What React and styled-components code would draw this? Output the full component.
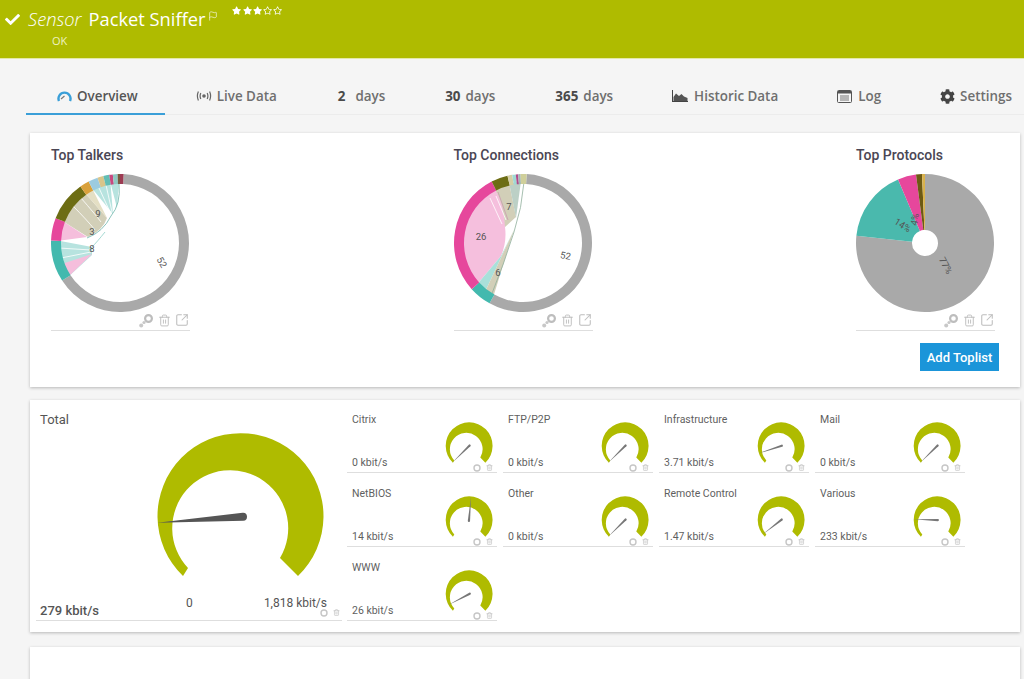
import React from 'react';
import styled, { createGlobalStyle } from 'styled-components';
import { FaCheck, FaStar, FaRegStar, FaCog } from 'react-icons/fa';
import { Flag, Trash2, SquareArrowOutUpRight } from 'lucide-react';

const GlobalStyle = createGlobalStyle`
  html, body {
    margin          : 0;
    height          : 100%;
    overflow        : hidden;
    background-color: #f5f5f5;
    font-family     : "Open Sans", "Liberation Sans", sans-serif;
  }
`
const Header = styled.header`
  height          : 59px;
  box-sizing      : border-box;
  padding         : 6px 0 0 5px;
  background-color: #afbb00;
  border-bottom   : 1px solid #e3e8a8;
  color           : #fff;
`
const HeaderTop = styled.div`
  display         : flex;
  align-items     : flex-start;
  height          : 28px;
`
const SensorName = styled.h1`
  margin          : 0 0 0 8px;
  font-size       : 18.3px;
  line-height     : 26px;
  font-weight     : 400;
  i { margin-right: 7px; font-weight: 300; }
`
const FlagMark = styled.span`
  margin          : -2px 0 0 3px;
  height          : 11px;
`
const Stars = styled.span`
  display         : flex;
  gap             : 1px;
  margin          : 0 0 0 14px;
  font-size       : 9.2px;
`
const StatusText = styled.div`
  margin-left     : 47px;
  font-size       : 11px;
  line-height     : 14px;
  color           : #eef2c0;
`
const TabBar = styled.nav`
  display         : flex;
  height          : 55px;
  margin-left     : 26px;
  border-bottom   : 1px solid #ececec;
`
const Tab = styled.div`
  display         : flex;
  align-items     : center;
  gap             : 5px;
  height          : 56px;
  box-sizing      : border-box;
  padding         : 20px ${p => p.$right || 30}px 0 ${p => p.$left || 29}px;
  border-bottom   : 2px solid ${p => p.$active ? '#3a9fd8' : 'transparent'};
  font-size       : 13.4px;
  font-weight     : 600;
  color           : ${p => p.$active ? '#555' : '#6f6f6f'};
  white-space     : nowrap;
  b { font-weight: 700; color: #4a4a4a; margin-right: ${p => p.$numGap || 0}px; }
`
const Panel = styled.section`
  margin          : ${p => p.$top}px 4px 0 30px;
  background-color: #fff;
  box-shadow      : 0 1px 3px rgba(0, 0, 0, .25);
`
const ToplistPanel = styled(Panel)`
  height          : 254px;
  box-sizing      : border-box;
  padding         : 12px 21px 0 21px;
`
const ChartRow = styled.div`
  display         : flex;
  justify-content : space-between;
  padding-right   : 4px;
`
const ChartBlock = styled.div`
  width           : 139px;
  border-bottom   : 1px solid #dedede;
  padding-bottom  : 2px;
`
const ChartTitle = styled.h3`
  margin          : 0 0 8px;
  font-family     : Roboto, sans-serif;
  font-size       : 14px;
  line-height     : 21px;
  font-weight     : 500;
  white-space     : nowrap;
  color           : #4a4654;
`
const ChartSvg = styled.svg`
  display         : block;
  width           : 138px;
  height          : 138px;
`
const ChartTools = styled.div`
  display         : flex;
  justify-content : flex-end;
  align-items     : center;
  gap             : 4px;
  height          : 16px;
  padding-right   : 1px;
  color           : #bdbdbd;
`
const ButtonRow = styled.div`
  display         : flex;
  justify-content : flex-end;
  margin-top      : 12px;
`
const AddButton = styled.button`
  width           : 79px;
  height          : 28px;
  padding         : 0;
  border          : none;
  background-color: #1b95d9;
  color           : #fff;
  font-family     : Roboto, sans-serif;
  font-size       : 13px;
  font-weight     : 500;
`
const GaugePanel = styled(Panel)`
  display         : flex;
  gap             : 5px;
  height          : 232px;
  box-sizing      : border-box;
  padding         : 5px 0 0 6px;
`
const TotalCell = styled.div`
  display         : flex;
  flex-direction  : column;
  width           : 306px;
  height          : 216px;
  box-sizing      : border-box;
  padding-left    : 4px;
  border-bottom   : 1px solid #dedede;
`
const CellLabel = styled.div`
  margin-top      : 5px;
  font-family     : Roboto, sans-serif;
  font-size       : 13px;
  line-height     : 20px;
  color           : #555;
`
const TotalGauge = styled.div`
  margin          : 2px 0 0 115px;
`
const TotalFooter = styled.div`
  display         : grid;
  grid-template-columns: 146px 77px 1fr;
  margin-top      : 12px;
  font-family     : Roboto, sans-serif;
  font-size       : 12px;
  line-height     : 14px;
  color           : #555;
`
const TotalValue = styled.div`
  padding-top     : 7px;
  font-size       : 13px;
  line-height     : 15px;
  font-weight     : 500;
`
const ScaleEnd = styled.div`
  display         : flex;
  flex-direction  : column;
  align-items     : flex-end;
  padding-right   : 2px;
  span { margin-right: 13px; }
`
const SmallGrid = styled.div`
  display         : grid;
  grid-template-columns: repeat(4, 150px);
  grid-auto-rows  : 68px;
  gap             : 6px;
`
const SmallCell = styled.div`
  display         : grid;
  grid-template-columns: 1fr 48px;
  padding         : 0 4px 0 5px;
  border-bottom   : 1px solid #dedede;
  font-family     : Roboto, sans-serif;
  font-size       : 10.5px;
  color           : #5f5f5f;
`
const SmallText = styled.div`
  display         : flex;
  flex-direction  : column;
  justify-content : space-between;
  line-height     : 14px;
  padding         : 8px 0 2px;
  white-space     : nowrap;
`
const SmallGauge = styled.div`
  margin-top      : 17px;
`
const GaugeSvg = styled.svg`
  display         : block;
  width           : ${p => p.$small ? 48 : 170}px;
  height          : ${p => p.$small ? 43 : 152}px;
`
const GaugeTools = styled.div`
  display         : flex;
  justify-content : flex-end;
  gap             : 5px;
  margin-top      : -1px;
  color           : #c6c6c6;
`
const EmptyPanel = styled(Panel)`
  height          : 60px;
`

const polar = (r, deg) => {
  const a = (deg - 90) * Math.PI / 180;
  return [69 + r * Math.cos(a), 69 + r * Math.sin(a)];
};
const wedge = (from, to, r0, r1) => {
  const large = to - from > 180 ? 1 : 0;
  const [x0, y0] = polar(r1, from);
  const [x1, y1] = polar(r1, to);
  const [x2, y2] = polar(r0, to);
  const [x3, y3] = polar(r0, from);
  return `M${x0} ${y0}A${r1} ${r1} 0 ${large} 1 ${x1} ${y1}L${x2} ${y2}A${r0} ${r0} 0 ${large} 0 ${x3} ${y3}Z`;
};
// a ribbon leaving the ring between two angles, then running to the given points
const fan = (from, to, rest) => {
  const [x0, y0] = polar(61, from);
  const [x1, y1] = polar(61, to);
  return `M${x0} ${y0}A61 61 0 0 1 ${x1} ${y1}${rest}Z`;
};

const charts = [
  {
    title: 'Top Talkers',
    inner: 59,
    segments: [
      [3, 237, '#a9a9a9'], [237, 272, '#43b9ae'], [272, 291, '#e6479c'], [291, 325, '#6d6d14'],
      [325, 333, '#d9a13c'], [333, 341, '#9ccbe0'], [341, 346, '#d8c58a'], [346, 351, '#62bdb4'],
      [351, 354, '#c8487f'], [354, 358, '#8fc8c2'], [358, 360, '#7a5a40'], [0, 3, '#9c3b52'],
    ],
    chords: [
      [fan(237, 272, 'L41 73L41 81'), '#b7e3df'],
      [fan(237, 250, 'L41 80'), '#f5bedc'],
      [fan(272, 291, 'L36 63'), '#f5bedc'],
      [fan(291, 325, 'L56 44Q52 56 37 63'), '#d2cfb8'],
      [fan(325, 333, 'L56 44'), '#e4dfc4'],
      [fan(333, 351, 'L62 40'), '#b7e3df'],
      [fan(351, 359, 'L66 34'), '#b7e3df'],
    ],
    lines: [
      ['M68 10Q70 30 60 42Q52 58 36 64', '#6fb5ab'],
      ['M41 73Q46 68 54 58', '#8fd0c8'],
      ['M8 74L40 76M10 84L40 78', '#ffffff'],
      ['M22 32Q36 46 44 56M30 24Q44 40 50 48', '#ffffff'],
      ['M48 14L60 40M55 11L61 38', '#ffffff'],
    ],
    labels: [[108, 90, '52', 60], [41, 78, '8', 0], [41, 61, '3', 0], [47, 43, '9', 0]],
  },
  {
    title: 'Top Connections',
    inner: 59,
    segments: [
      [3, 209, '#a9a9a9'], [209, 228, '#43b9ae'], [228, 333, '#e6479c'], [333, 347, '#6d6d14'],
      [347, 351, '#d6cfa6'], [351, 354, '#9fd8d4'], [354, 356, '#b04a8a'], [356, 358, '#9fb7b5'], [358, 363, '#cfcf9a'],
    ],
    chords: [
      [fan(228, 333, 'Q52 34 51 53Q53 68 47 82'), '#f5bfdd'],
      [fan(333, 347, 'L62 43L51 53Q50 30 41 15'), '#d2cfb8'],
      [fan(218, 228, 'L47 82L60 56'), '#a9e0da'],
      [fan(209, 218, 'L60 56'), '#d2cfb8'],
      [fan(347, 358, 'L62 44'), '#bcd0c6'],
    ],
    lines: [
      ['M70 8Q68 34 60 58Q50 90 37 122', '#8fae9c'],
      ['M42 22L52 46M36 24L48 50', '#ffffff'],
      ['M44 18L54 46', '#c99ab0'],
    ],
    labels: [[27, 66, '26', 0], [111, 85, '52', 10], [44, 102, '6', 0], [55, 36, '7', 0]],
  },
  {
    title: 'Top Protocols',
    inner: 13,
    segments: [
      [0, 276, '#a9a9a9'], [276, 337, '#4ab9ad'], [337, 352.5, '#e6479c'], [352.5, 357.5, '#6d5a14'], [357.5, 360, '#d9b24c'],
    ],
    chords: [],
    lines: [],
    labels: [[87, 93, '77%', 62], [45, 54, '14%', 32], [62, 46, '4%', -80]],
  },
];

const gauges = [
  ['Citrix', '0 kbit/s', -135],
  ['FTP/P2P', '0 kbit/s', -135],
  ['Infrastructure', '3.71 kbit/s', -108],
  ['Mail', '0 kbit/s', -135],
  ['NetBIOS', '14 kbit/s', 5],
  ['Other', '0 kbit/s', -135],
  ['Remote Control', '1.47 kbit/s', -128],
  ['Various', '233 kbit/s', -88],
  ['WWW', '26 kbit/s', -118],
];

const tabs = [
  { icon: <OverviewIcon />, label: 'Overview', active: true, left: 31, right: 27 },
  { icon: <LiveIcon />, label: 'Live Data', left: 31 },
  { num: '2', label: 'days', numGap: 5, left: 31, right: 31 },
  { num: '30', label: 'days', right: 31 },
  { num: '365', label: 'days', right: 29 },
  { icon: <HistoryIcon />, label: 'Historic Data' },
  { icon: <LogIcon />, label: 'Log' },
  { icon: <FaCog size={15} color="#444" />, label: 'Settings' },
];

function OverviewIcon() {
  return (
    <svg width="15" height="12" viewBox="0 0 15 12" fill="none">
      <path d="M2 11A6 6 0 1 1 13 11" stroke="#3a9fd8" strokeWidth="2.4" />
      <path d="M4 9L7.5 6" stroke="#777" strokeWidth="1.2" />
    </svg>
  );
}

function LiveIcon() {
  return (
    <svg width="16" height="12" viewBox="0 0 16 12" fill="none" stroke="#666" strokeWidth="1.2">
      <circle cx="8" cy="6" r="1.8" fill="#666" stroke="none" />
      <path d="M4.8 3Q3.4 6 4.8 9M11.2 3Q12.6 6 11.2 9M2.4 1.5Q.4 6 2.4 10.5M13.6 1.5Q15.6 6 13.6 10.5" />
    </svg>
  );
}

function HistoryIcon() {
  return (
    <svg width="18" height="13" viewBox="0 0 18 13">
      <path d="M1 0V12H17V11H2V0Z" fill="#444" />
      <path d="M2.5 11L2.5 7L5 3.5L8 6L10.5 4L13 6.5L16.5 8V11Z" fill="#555" />
    </svg>
  );
}

function LogIcon() {
  return (
    <svg width="16" height="13" viewBox="0 0 16 13">
      <rect x=".5" y=".5" width="14" height="12" rx="1" fill="#f5f5f5" stroke="#555" />
      <rect x="1" y="1" width="13" height="2.5" fill="#555" />
      <path d="M3 6H12M3 8H12M3 10H12" stroke="#777" />
    </svg>
  );
}

function KeyIcon() {
  return (
    <svg width="15" height="15" viewBox="0 0 15 15" fill="none">
      <circle cx="9.5" cy="5.5" r="3.4" stroke="#bdbdbd" strokeWidth="2.2" />
      <circle cx="5" cy="9.5" r="1.6" fill="#c8c8c8" />
      <circle cx="2.2" cy="12.5" r="2" fill="#c8c8c8" />
    </svg>
  );
}

function TinyTools() {
  return (
    <GaugeTools>
      <svg width="8" height="8" viewBox="0 0 8 8" fill="none">
        <circle cx="4" cy="4" r="3" stroke="currentColor" strokeWidth="1.4" />
      </svg>
      <Trash2 size={7} strokeWidth={2.4} />
    </GaugeTools>
  );
}

function Gauge({ angle, small }) {
  return (
    <GaugeSvg $small={small} viewBox="0 0 170 152">
      <path d="M28 144A83 83 0 1 1 143 144L125 126A58 58 0 1 0 33 136Z" fill="#afbb00" />
      <path
        d="M85 2L89 88Q89 92 85 92Q81 92 81 88Z"
        fill={small ? '#777' : '#555'}
        transform={`rotate(${angle} 85 85)`}
      />
    </GaugeSvg>
  );
}

function Chart({ chart }) {
  return (
    <ChartBlock>
      <ChartTitle>{chart.title}</ChartTitle>
      <ChartSvg viewBox="0 0 138 138">
        {chart.chords.map(([d, fill], i) => <path key={i} d={d} fill={fill} />)}
        {chart.lines.map(([d, stroke], i) => <path key={i} d={d} fill="none" stroke={stroke} strokeWidth=".8" />)}
        {chart.segments.map(([from, to, fill], i) => (
          <path key={i} d={wedge(from, to, chart.inner, 69)} fill={fill} />
        ))}
        {chart.labels.map(([x, y, text, rot], i) => (
          <text
            key={i}
            x={x}
            y={y}
            fontSize="9.5"
            fontFamily="Roboto, sans-serif"
            textAnchor="middle"
            fill="#555"
            transform={`rotate(${rot} ${x} ${y})`}
          >
            {text}
          </text>
        ))}
      </ChartSvg>
      <ChartTools>
        <KeyIcon />
        <Trash2 size={13} strokeWidth={1.7} />
        <SquareArrowOutUpRight size={14} strokeWidth={1.8} />
      </ChartTools>
    </ChartBlock>
  );
}

const App = () => (
  <>
    <GlobalStyle />
    <Header>
      <HeaderTop>
        <FaCheck size={15} style={{ marginTop: 6 }} />
        <SensorName><i>Sensor</i>Packet Sniffer</SensorName>
        <FlagMark><Flag size={10} strokeWidth={1.5} /></FlagMark>
        <Stars>
          <FaStar /><FaStar /><FaStar /><FaRegStar /><FaRegStar />
        </Stars>
      </HeaderTop>
      <StatusText>OK</StatusText>
    </Header>
    <TabBar>
      {tabs.map((tab, i) => (
        <Tab key={i} $active={tab.active} $left={tab.left} $right={tab.right} $numGap={tab.numGap}>
          {tab.icon}
          {tab.num && <b>{tab.num}</b>}
          {tab.label}
        </Tab>
      ))}
    </TabBar>
    <ToplistPanel $top={18}>
      <ChartRow>
        {charts.map(chart => <Chart key={chart.title} chart={chart} />)}
      </ChartRow>
      <ButtonRow>
        <AddButton>Add Toplist</AddButton>
      </ButtonRow>
    </ToplistPanel>
    <GaugePanel $top={13}>
      <TotalCell>
        <CellLabel>Total</CellLabel>
        <TotalGauge><Gauge angle={-94} /></TotalGauge>
        <TotalFooter>
          <TotalValue>279 kbit/s</TotalValue>
          <div>0</div>
          <ScaleEnd>
            <span>1,818 kbit/s</span>
            <TinyTools />
          </ScaleEnd>
        </TotalFooter>
      </TotalCell>
      <SmallGrid>
        {gauges.map(([name, value, angle]) => (
          <SmallCell key={name}>
            <SmallText>
              <span>{name}</span>
              <span>{value}</span>
            </SmallText>
            <SmallGauge>
              <Gauge small angle={angle} />
              <TinyTools />
            </SmallGauge>
          </SmallCell>
        ))}
      </SmallGrid>
    </GaugePanel>
    <EmptyPanel $top={15} />
  </>
);

export default App;
